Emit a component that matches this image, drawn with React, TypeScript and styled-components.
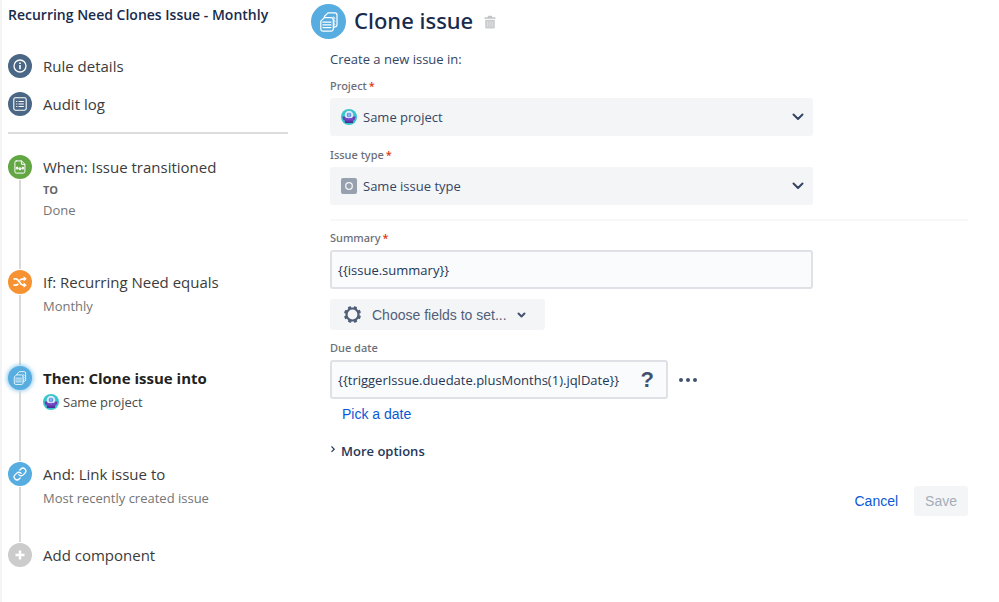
import React, { useState } from 'react';
import styled, { createGlobalStyle, css } from 'styled-components';

const ui = '"Open Sans", "Noto Sans", sans-serif';
const medium = '"Noto Sans", "Open Sans", sans-serif';
const arial = '"Liberation Sans", Arial, sans-serif';

const GlobalStyle = createGlobalStyle`
  *, *::before, *::after { box-sizing: border-box; }
  body { margin: 0; background: #fff; font-family: ${ui}; color: #333; }
  button, input, select { font: inherit; color: inherit; margin: 0; }
  h1, h2, p, ul, ol { margin: 0; padding: 0; }
  svg { display: block; flex: none; }
`;

const Page = styled.div`
  display: grid;
  grid-template-columns: 309px minmax(0, 1fr);
  min-height: 100vh;
  border-left: 2px solid #f4f4f5;
`;

const Sidebar = styled.aside`
  padding: 3px 23px 0 6px;
`;

const RuleName = styled.h2`
  font-size: 14px;
  line-height: 24px;
  font-weight: 600;
  color: #172b4d;
  white-space: nowrap;
`;

const RuleNav = styled.nav`
  display: flex;
  flex-direction: column;
  gap: 14px;
  padding: 27px 0 16px;
  margin-bottom: 21px;
  border-bottom: 2px solid #dcdcdc;
`;

const NavLink = styled.a`
  display: flex;
  align-items: center;
  gap: 11px;
  font-size: 15px;
  line-height: 24px;
  color: #3b3b3b;
  text-decoration: none;
`;

const Badge = styled.span<{ $color: string; $active?: boolean; $large?: boolean }>`
  display: flex;
  align-items: center;
  justify-content: center;
  flex: none;
  width: ${p => (p.$large ? 35 : 24)}px;
  height: ${p => (p.$large ? 35 : 24)}px;
  border-radius: 50%;
  background: ${p => p.$color};
  color: #fff;
  ${p => p.$active && css`box-shadow: 0 0 4px 1px rgba(87, 173, 224, 0.7);`}
`;

const Steps = styled.ol`
  list-style: none;
`;

const Step = styled.li<{ $height: number }>`
  display: grid;
  grid-template-columns: 24px minmax(0, 1fr);
  column-gap: 11px;
  min-height: ${p => p.$height}px;
`;

const Rail = styled.div`
  display: flex;
  flex-direction: column;
  align-items: center;
`;

const Connector = styled.span`
  flex: 1;
  width: 2px;
  margin: 1px 0;
  background: #d9d9d9;
`;

const StepButton = styled.button<{ $active?: boolean }>`
  display: block;
  padding: 0;
  border: 0;
  background: none;
  text-align: left;
  font-size: 15px;
  line-height: 24px;
  font-weight: ${p => (p.$active ? 700 : 400)};
  color: ${p => (p.$active ? '#222' : '#3b3b3b')};
  white-space: nowrap;
  cursor: pointer;
`;

const StepKey = styled.p`
  font-size: 11px;
  line-height: 22px;
  font-weight: 700;
  color: #666;
`;

const StepDetail = styled.p<{ $dark?: boolean; $tight?: boolean }>`
  display: flex;
  align-items: center;
  gap: 4px;
  font-size: 13px;
  line-height: ${p => (p.$tight ? 18 : 24)}px;
  color: ${p => (p.$dark ? '#4a4a4a' : '#757575')};
`;

const Main = styled.main`
  padding: 4px 31px 24px 0;
`;

const Header = styled.header`
  display: flex;
  align-items: center;
  gap: 8px;
`;

const Title = styled.h1`
  font-family: ${medium};
  font-size: 22px;
  line-height: 32px;
  font-weight: 500;
  color: #172b4d;
  margin-right: 3px;
  padding-bottom: 3px;
`;

const IconButton = styled.button<{ $color: string }>`
  display: flex;
  padding: 0;
  border: 0;
  background: none;
  color: ${p => p.$color};
  cursor: pointer;
`;

const Form = styled.form`
  display: flex;
  flex-direction: column;
  padding: 10px 0 0 19px;
`;

const Intro = styled.p`
  font-size: 13px;
  line-height: 20px;
  color: #344563;
  margin-bottom: 8px;
`;

const Field = styled.div`
  display: flex;
  flex-direction: column;
  max-width: 483px;
  margin-bottom: 10px;
`;

const Label = styled.label`
  font-family: ${medium};
  font-size: 11px;
  line-height: 18px;
  padding-bottom: 3px;
  font-weight: 500;
  color: #6b6e76;
`;

const Required = styled.span`
  color: #de350b;
  margin-left: 2px;
`;

const SelectBox = styled.div`
  display: flex;
  align-items: center;
  height: 38px;
  padding: 0 9px 0 11px;
  border-radius: 3px;
  background: #f4f5f7;
  color: #344563;
`;

const Select = styled.select`
  flex: 1;
  min-width: 0;
  height: 100%;
  padding: 0 0 0 6px;
  border: 0;
  outline: 0;
  appearance: none;
  background: none;
  font-size: 13px;
`;

const Divider = styled.hr`
  width: 100%;
  height: 2px;
  margin: 4px 0 8px;
  border: 0;
  background: #f7f8f9;
`;

const InputBox = styled.div`
  display: flex;
  align-items: center;
  flex: 1 1 auto;
  height: 39px;
  padding: 0 12px 0 6px;
  border: 2px solid #dfe1e6;
  border-radius: 3px;
  background: #fafbfc;
`;

const Input = styled.input`
  flex: 1;
  min-width: 0;
  height: 100%;
  padding: 0;
  border: 0;
  outline: 0;
  background: none;
  font-size: 13px;
  color: #243757;
`;

const FieldsButton = styled.button`
  display: flex;
  align-items: center;
  align-self: flex-start;
  height: 31px;
  width: 215px;
  padding: 0 19px 0 13px;
  margin-bottom: 9px;
  border: 0;
  border-radius: 3px;
  background: #f4f5f7;
  color: #505f79;
  font-family: ${arial};
  font-size: 14px;
  cursor: pointer;
`;

const FieldsText = styled.span`
  flex: 1;
  margin-left: 10px;
  text-align: left;
`;

const InputRow = styled.div`
  display: flex;
  align-items: center;
  gap: 11px;
  max-width: 367px;
`;

const HelpButton = styled.button`
  padding: 0;
  border: 0;
  background: none;
  font-family: ${arial};
  font-size: 22px;
  line-height: 24px;
  font-weight: 700;
  color: #42526e;
  cursor: pointer;
`;

const LinkButton = styled.button`
  padding: 0 12px;
  border: 0;
  background: none;
  font-family: ${arial};
  font-size: 14px;
  line-height: 30px;
  color: #0b58d6;
  cursor: pointer;
`;

const PickDate = styled(LinkButton)`
  align-self: flex-start;
`;

const MoreOptions = styled.button`
  display: flex;
  align-items: center;
  align-self: flex-start;
  gap: 5px;
  margin-top: 10px;
  padding: 0;
  border: 0;
  background: none;
  font-size: 13px;
  line-height: 24px;
  font-weight: 600;
  color: #253858;
  cursor: pointer;
`;

const Actions = styled.div`
  display: flex;
  justify-content: flex-end;
  gap: 4px;
  margin-top: 23px;
`;

const SaveButton = styled.button`
  height: 30px;
  padding: 0 11px;
  border: 0;
  border-radius: 3px;
  background: #f4f5f7;
  color: #a5adba;
  font-family: ${arial};
  font-size: 14px;
`;

const InfoIcon = () => (
  <svg width="14" height="14" viewBox="0 0 14 14" fill="none" stroke="currentColor">
    <circle cx="7" cy="7" r="6" strokeWidth="1.3" />
    <path d="M7 6v4.2" strokeWidth="1.6" />
    <path d="M7 3.4v1.5" strokeWidth="1.6" />
  </svg>
);

const LogIcon = () => (
  <svg width="14" height="14" viewBox="0 0 14 14" fill="none" stroke="currentColor">
    <rect x="0.8" y="0.8" width="12.4" height="12.4" rx="1.6" strokeWidth="1.1" />
    <path d="M3.2 4.5h1.2M3.2 7h1.2M3.2 9.5h1.2M5.6 4.5h5.2M5.6 7h5.2M5.6 9.5h5.2" strokeWidth="1.1" />
  </svg>
);

const TransitionIcon = () => (
  <svg width="12" height="14" viewBox="0 0 12 14" fill="none" stroke="currentColor" strokeLinejoin="round" strokeLinecap="round">
    <path d="M2.2.9h5.3l3.4 3.3v7.3a1.6 1.6 0 0 1-1.6 1.6H2.2A1.5 1.5 0 0 1 .9 11.6V2.3A1.4 1.4 0 0 1 2.2.9zM7.4 1v3.3h3.4" strokeWidth="1" />
    <path d="M3.1 9.2V7.3M2.2 8.1l.9-.9 1 .9M6 7.4v2.3M5 8.9l1 .9 1-.9M8.9 9.2V7.3M8 8.1l.9-.9.8.9" strokeWidth="1.2" />
  </svg>
);

const ShuffleIcon = () => (
  <svg width="14" height="12" viewBox="0 0 14 12" fill="none" stroke="currentColor" strokeWidth="1.8">
    <path d="M.5 2.8h2.2c3.8 0 3.8 6.4 7.4 6.4h1.2M.5 9.2h2.2c1.2 0 1.9-.6 2.5-1.5M7 4.3c.7-1 1.5-1.5 3.1-1.5h1.2" />
    <path d="M10.6.2 13.8 2.8l-3.2 2.6zM10.6 6.6l3.2 2.6-3.2 2.6z" fill="currentColor" stroke="none" />
  </svg>
);

const CloneIcon = ({ size }: { size: number }) => (
  <svg width={size} height={size} viewBox="0 0 20 20" fill="none" stroke="currentColor" strokeWidth="1.2" strokeLinejoin="round" strokeLinecap="round">
    <path d="M5.4 5.6h6.7a2.2 2.2 0 0 1 2.2 2.2v9.2a2.2 2.2 0 0 1-2.2 2.2H4a2.2 2.2 0 0 1-2.2-2.2V9.2z" />
    <path d="M3.9 10.2h8M3.9 12.9h8M3.9 15.6h8" />
    <path d="M5.4 5.4V4.5L9 .9h6.800A2.200 2.200 0 0 1 18 3.100v9.600a2.200 2.200 0 0 1-1.900 2.200l-1.600.6" />
    <path d="M14.300 4.800 16 6.300l-1.500 1.500L16 9.400l-1.500 1.500 1.500 1.600-1.500 1.300" strokeWidth="1" />
  </svg>
);

const LinkIcon = () => (
  <svg width="14" height="14" viewBox="0 0 24 24" fill="none" stroke="currentColor" strokeWidth="2.2" strokeLinecap="round" strokeLinejoin="round">
    <path d="M10 13a5 5 0 0 0 7.54.54l3-3a5 5 0 0 0-7.07-7.07l-1.72 1.71" />
    <path d="M14 11a5 5 0 0 0-7.54-.54l-3 3a5 5 0 0 0 7.07 7.07l1.71-1.71" />
  </svg>
);

const PlusIcon = () => (
  <svg width="10" height="10" viewBox="0 0 10 10" stroke="currentColor" strokeWidth="2.4">
    <path d="M5 .5v9M.5 5h9" />
  </svg>
);

const TrashIcon = () => (
  <svg width="12" height="14" viewBox="0 0 12 14">
    <path d="M.5 2.2h3L4.3.7h3.4l.8 1.5h3v1.6H.5z" fill="#c3c4c8" />
    <path d="M1.2 4.8h9.6v7.5a1.3 1.3 0 0 1-1.3 1.3h-7a1.3 1.3 0 0 1-1.3-1.3z" fill="#cbccce" />
    <path d="M3.7 6.4v5.4M6 6.4v5.4M8.3 6.4v5.4" stroke="#e5e6e8" strokeWidth=".8" />
  </svg>
);

const ProjectIcon = () => (
  <svg width="16" height="16" viewBox="0 0 16 16">
    <circle cx="8" cy="8" r="8" fill="#36c5cb" />
    <path d="M1.6 7.6h12.8c.2 2.3-1 3.9-2.6 4.5l.5 1.7H3.7l.5-1.7c-1.6-.6-2.8-2.2-2.6-4.5z" fill="#6a3fb5" />
    <path d="M3.7 12.6h8.600l-.7 1.500H4.400z" fill="#4b2f96" />
    <circle cx="8" cy="6" r="4.3" fill="#d9e9fb" />
    <circle cx="8" cy="6" r="2.3" fill="#5b93e0" />
    <path d="M7.2 5.2h1.6M7.2 6.8h1.6" stroke="#cfe4fb" strokeWidth=".8" />
    <path d="M3.7 8.3c2 1.2 6.6 1.2 8.6 0v2.5H3.7z" fill="#7a48c6" />
  </svg>
);

const IssueTypeIcon = () => (
  <svg width="16" height="16" viewBox="0 0 16 16">
    <rect width="16" height="16" rx="2" fill="#97a0af" />
    <circle cx="8" cy="8" r="3.3" fill="none" stroke="#f4f5f7" strokeWidth="1.3" />
  </svg>
);

const Chevron = () => (
  <svg width="12" height="12" viewBox="0 0 12 12" fill="none" stroke="currentColor" strokeWidth="2" strokeLinecap="round" strokeLinejoin="round">
    <path d="M1.5 3.5 6 8l4.5-4.5" />
  </svg>
);

const SmallChevron = () => (
  <svg width="9" height="9" viewBox="0 0 9 9" fill="none" stroke="#42526e" strokeWidth="2" strokeLinecap="round" strokeLinejoin="round">
    <path d="M1.5 3.5l3 3 3-3" />
  </svg>
);

const ChevronRight = () => (
  <svg width="6" height="12" viewBox="0 0 6 12" fill="none" stroke="currentColor" strokeWidth="1.2">
    <path d="M1.5 1.5 4.2 4.2 1.5 6.9" />
  </svg>
);

const teeth = [0, 45, 90, 135, 180, 225, 270, 315];

const GearIcon = () => (
  <svg width="19" height="19" viewBox="0 0 20 20" fill="currentColor">
    <circle cx="10" cy="10" r="6.3" fill="none" stroke="currentColor" strokeWidth="2.3" />
    {teeth.map(a => (
      <rect key={a} x="8.2" y="1" width="3.6" height="3" rx=".8" transform={`rotate(${a + 22} 10 10)`} />
    ))}
  </svg>
);

const DotsIcon = () => (
  <svg width="18" height="6" viewBox="0 0 18 6" fill="currentColor">
    <circle cx="2" cy="3" r="2" />
    <circle cx="9" cy="3" r="2" />
    <circle cx="16" cy="3" r="2" />
  </svg>
);

export default function App() {
  const [summary, setSummary] = useState('{{issue.summary}}');
  const [due, setDue] = useState('{{triggerIssue.duedate.plusMonths(1).jqlDate}}');

  return (
    <>
      <GlobalStyle />
      <Page>
        <Sidebar>
          <RuleName>Recurring Need Clones Issue - Monthly</RuleName>
          <RuleNav aria-label="Rule">
            <NavLink href="#details"><Badge $color="#4a6785"><InfoIcon /></Badge>Rule details</NavLink>
            <NavLink href="#audit"><Badge $color="#4a6785"><LogIcon /></Badge>Audit log</NavLink>
          </RuleNav>
          <Steps>
            <Step $height={115}>
              <Rail><Badge $color="#62a744"><TransitionIcon /></Badge><Connector /></Rail>
              <div>
                <StepButton type="button">When: Issue transitioned</StepButton>
                <StepKey>TO</StepKey>
                <StepDetail $tight>Done</StepDetail>
              </div>
            </Step>
            <Step $height={96}>
              <Rail><Badge $color="#f79232"><ShuffleIcon /></Badge><Connector /></Rail>
              <div>
                <StepButton type="button">If: Recurring Need equals</StepButton>
                <StepDetail>Monthly</StepDetail>
              </div>
            </Step>
            <Step $height={96}>
              <Rail><Badge $color="#57ade0" $active><CloneIcon size={14} /></Badge><Connector /></Rail>
              <div>
                <StepButton type="button" $active>Then: Clone issue into</StepButton>
                <StepDetail $dark><ProjectIcon />Same project</StepDetail>
              </div>
            </Step>
            <Step $height={81}>
              <Rail><Badge $color="#57ade0"><LinkIcon /></Badge><Connector /></Rail>
              <div>
                <StepButton type="button">And: Link issue to</StepButton>
                <StepDetail>Most recently created issue</StepDetail>
              </div>
            </Step>
            <Step $height={24}>
              <Rail><Badge $color="#cccccc"><PlusIcon /></Badge></Rail>
              <StepButton type="button">Add component</StepButton>
            </Step>
          </Steps>
        </Sidebar>

        <Main>
          <Header>
            <Badge $color="#57ade0" $large><CloneIcon size={20} /></Badge>
            <Title>Clone issue</Title>
            <IconButton type="button" $color="#c1c3c8" aria-label="Delete"><TrashIcon /></IconButton>
          </Header>
          <Form onSubmit={e => e.preventDefault()}>
            <Intro>Create a new issue in:</Intro>
            <Field>
              <Label htmlFor="project">Project<Required>*</Required></Label>
              <SelectBox>
                <ProjectIcon />
                <Select id="project"><option>Same project</option></Select>
                <Chevron />
              </SelectBox>
            </Field>
            <Field>
              <Label htmlFor="type">Issue type<Required>*</Required></Label>
              <SelectBox>
                <IssueTypeIcon />
                <Select id="type"><option>Same issue type</option></Select>
                <Chevron />
              </SelectBox>
            </Field>
            <Divider />
            <Field>
              <Label htmlFor="summary">Summary<Required>*</Required></Label>
              <InputBox>
                <Input id="summary" value={summary} onChange={e => setSummary(e.target.value)} />
              </InputBox>
            </Field>
            <FieldsButton type="button" aria-haspopup="listbox">
              <GearIcon />
              <FieldsText>Choose fields to set...</FieldsText>
              <SmallChevron />
            </FieldsButton>
            <Label htmlFor="due">Due date</Label>
            <InputRow>
              <InputBox>
                <Input id="due" value={due} onChange={e => setDue(e.target.value)} />
                <HelpButton type="button" aria-label="Help">?</HelpButton>
              </InputBox>
              <IconButton type="button" $color="#42526e" aria-label="Field options"><DotsIcon /></IconButton>
            </InputRow>
            <PickDate type="button">Pick a date</PickDate>
            <MoreOptions type="button" aria-expanded="false"><ChevronRight />More options</MoreOptions>
            <Actions>
              <LinkButton type="button">Cancel</LinkButton>
              <SaveButton type="submit" disabled>Save</SaveButton>
            </Actions>
          </Form>
        </Main>
      </Page>
    </>
  );
}
